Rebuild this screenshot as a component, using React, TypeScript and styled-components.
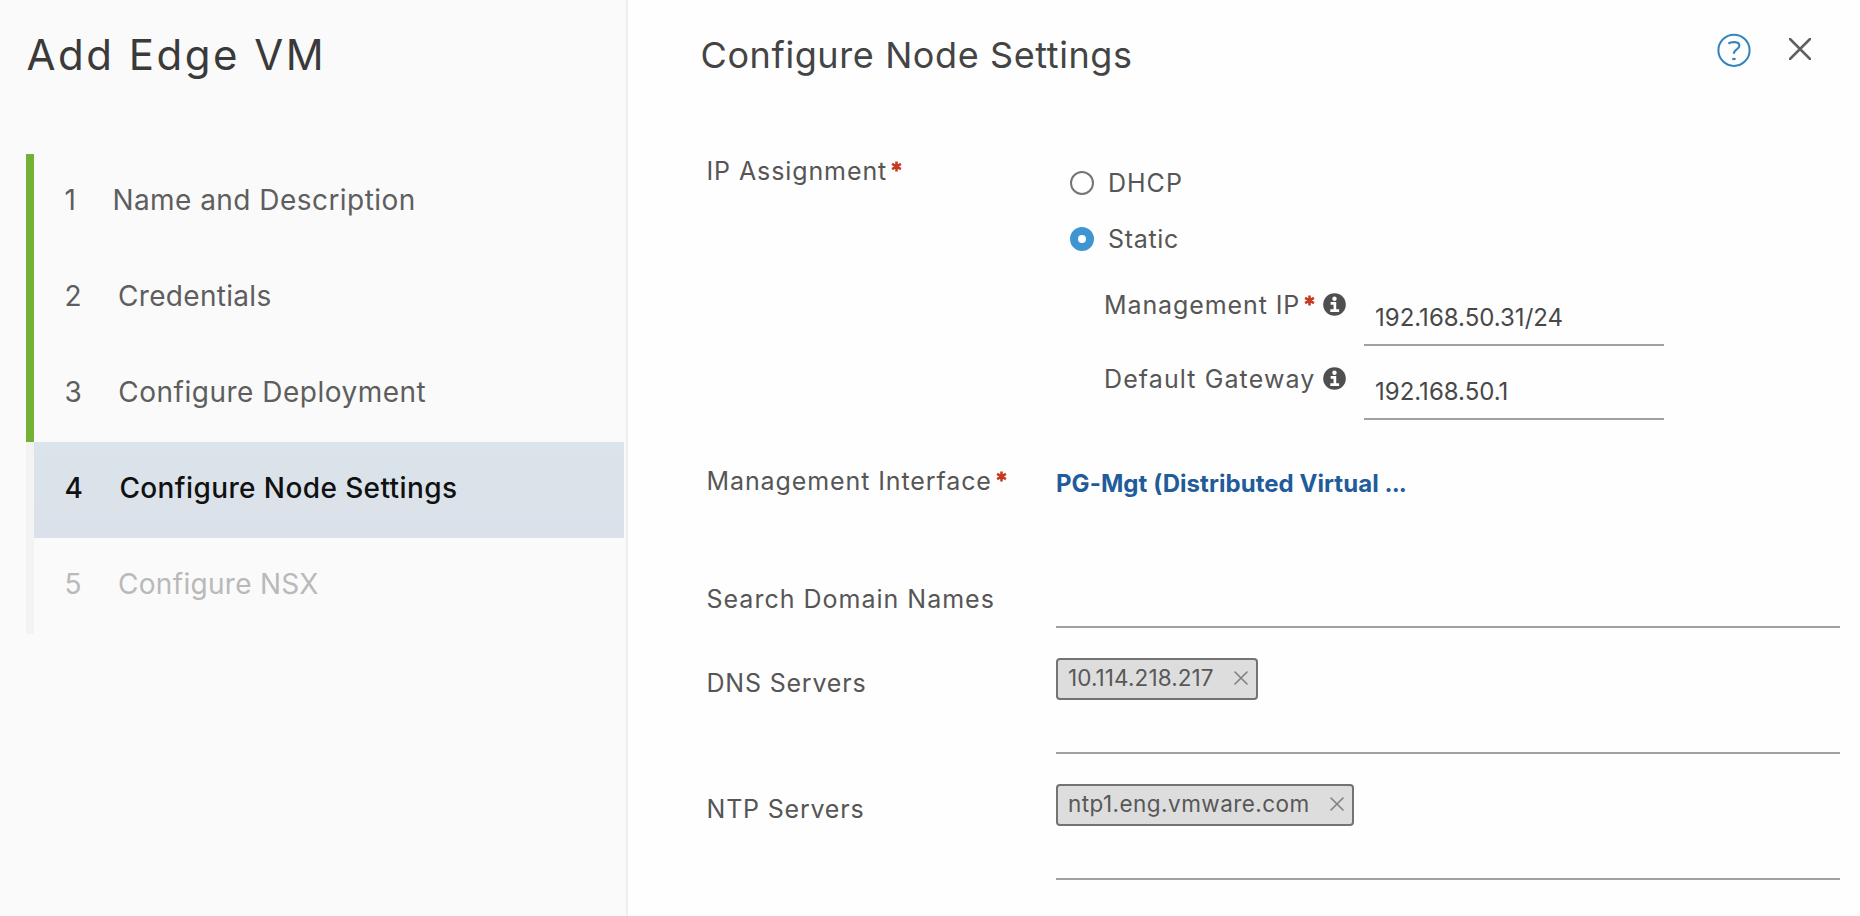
import React from "react";
import styled, { createGlobalStyle } from "styled-components";

const GlobalStyle = createGlobalStyle`
  * { box-sizing: border-box; }
  body { margin: 0; background: #fefefe; }
`;

const Wizard = styled.div`
  display: flex;
  width: 1860px;
  height: 916px;
  overflow: hidden;
  font-family: Inter, "Liberation Sans", sans-serif;
  color: #565656;
  background: #fefefe;
`;

const Sidebar = styled.aside`
  width: 628px;
  flex: none;
  background: #fafafa;
  border-right: 2px solid #eeeeee;
  padding: 30px 2px 0 26px;
`;

const WizardTitle = styled.h1`
  margin: 0 0 74px;
  padding-left: 0.5px;
  font-size: 42px;
  line-height: 50px;
  font-weight: 400;
  letter-spacing: 2.5px;
  color: #3a3a3a;
`;

const StepList = styled.ol`
  list-style: none;
  margin: 0;
  padding: 0;
`;

type StepState = "done" | "active" | "disabled";

const stepColors: Record<StepState, string> = {
  done: "#5e5e5e",
  active: "#111111",
  disabled: "#b9b9b9",
};

const StepItem = styled.li<{ $state: StepState }>`
  display: flex;
  align-items: center;
  gap: 36.5px;
  height: 96px;
  padding: 0 0 4px 30.5px;
  border-left: 8px solid ${(p) => (p.$state === "done" ? "#72b036" : "#f3f3f3")};
  background: ${(p) =>
    p.$state === "active" ? "linear-gradient(#dbe4ea, #dbe1ea) padding-box" : "transparent"};
  color: ${(p) => stepColors[p.$state]};
  font-size: 28px;
  line-height: 40px;
  font-weight: ${(p) => (p.$state === "active" ? 500 : 400)};
`;

const StepLabel = styled.span<{ $tracking: number }>`
  letter-spacing: ${(p) => p.$tracking}px;
  white-space: nowrap;
`;

const Main = styled.main`
  flex: 1;
  padding: 33px 20px 0 71.5px;
`;

const Header = styled.header`
  display: flex;
  justify-content: space-between;
  align-items: flex-start;
  height: 122px;
`;

const PageTitle = styled.h2`
  margin: 0;
  padding-left: 1px;
  font-size: 36px;
  line-height: 44px;
  font-weight: 400;
  letter-spacing: 0.6px;
  color: #444444;
`;

const HeaderActions = styled.div`
  display: flex;
  align-items: flex-start;
  gap: 38px;
  padding-right: 29px;
`;

const IconButton = styled.button`
  display: flex;
  padding: 0;
  border: 0;
  background: none;
`;

const Form = styled.form`
  padding-left: 5.5px;
`;

const FormRow = styled.div<{ $height: number; $labelTop: number; $gap?: number }>`
  display: grid;
  grid-template-columns: 351px 784px;
  height: ${(p) => p.$height}px;
  margin-top: ${(p) => p.$gap ?? 0}px;

  > label {
    padding: ${(p) => p.$labelTop}px 0 0 1.5px;
  }
`;

const Label = styled.label<{ $tracking?: number }>`
  display: flex;
  align-items: flex-start;
  font-size: 25px;
  line-height: 30px;
  letter-spacing: ${(p) => p.$tracking ?? 0.9}px;
  white-space: nowrap;
`;

const RequiredIcon = styled.svg`
  flex: none;
  width: 11px;
  height: 11px;
  margin: 5px 0 0 4px;
`;

const InfoIcon = styled.svg`
  flex: none;
  width: 23px;
  height: 23px;
  margin-top: 3px;
  margin-left: auto;
`;

const RadioRow = styled.div`
  display: flex;
  align-items: center;
  gap: 14px;
  height: 56px;
  padding-left: 14px;
`;

const RadioMark = styled.span<{ $checked?: boolean }>`
  width: 24px;
  height: 24px;
  border-radius: 50%;
  background: #ffffff;
  border: ${(p) => (p.$checked ? "8px solid #3f95d2" : "2px solid #757575")};
`;

const StaticSettings = styled.div`
  padding: 5px 0 0 48px;
`;

const StaticRow = styled.div`
  display: grid;
  grid-template-columns: 242px 300px;
  column-gap: 18px;
  height: 74px;

  > label {
    padding-top: 18px;
  }
`;

const InputLine = styled.div`
  border-bottom: 2px solid #a0a0a0;
  padding: 31px 0 0 11px;
  font-size: 24px;
  line-height: 30px;
  letter-spacing: 0;
  color: #484848;
`;

const LinkValue = styled.a`
  padding-top: 3px;
  font-size: 24px;
  line-height: 30px;
  font-weight: 700;
  font-feature-settings: "calt" 0;
  letter-spacing: 0.05px;
  color: #1f5c99;
  white-space: nowrap;
`;

const Ellipsis = styled.span`
  letter-spacing: -0.8px;
`;

const ChipField = styled.div`
  border-bottom: 2px solid #a0a0a0;
  padding-top: 30px;
`;

const Chip = styled.span<{ $width: number; $tracking: number }>`
  display: flex;
  align-items: center;
  justify-content: space-between;
  width: ${(p) => p.$width}px;
  height: 42px;
  padding: 0 8px 2px 10px;
  border: 2px solid #737373;
  border-radius: 4px;
  background: #dddddd;
  font-size: 22.5px;
  line-height: 30px;
  letter-spacing: ${(p) => p.$tracking}px;
  color: #585858;
`;

const steps: { label: string; state: StepState; tracking: number }[] = [
  { label: "Name and Description", state: "done", tracking: 0.45 },
  { label: "Credentials", state: "done", tracking: 0.3 },
  { label: "Configure Deployment", state: "done", tracking: 0.5 },
  { label: "Configure Node Settings", state: "active", tracking: 0.4 },
  { label: "Configure NSX", state: "disabled", tracking: 0.3 },
];

const Required = () => (
  <RequiredIcon viewBox="0 0 12 12" aria-label="required">
    <path d="M6 0.5V11.5M1.2 3.2L10.8 8.8M10.8 3.2L1.2 8.8" stroke="#c73a22" strokeWidth="2.8" />
  </RequiredIcon>
);

const Info = () => (
  <InfoIcon viewBox="0 0 24 24" aria-label="info">
    <circle cx="12" cy="12" r="11.8" fill="#4f4f4f" />
    <circle cx="12" cy="6" r="2.3" fill="#fff" />
    <path d="M8 10.8H12.4V18M7.6 18.4H16.8" fill="none" stroke="#fff" strokeWidth="2.8" />
  </InfoIcon>
);

const Cross = ({ size, color, width }: { size: number; color: string; width: number }) => (
  <svg width={size} height={size} viewBox={`0 0 ${size} ${size}`}>
    <path
      d={`M1 1L${size - 1} ${size - 1}M${size - 1} 1L1 ${size - 1}`}
      stroke={color}
      strokeWidth={width}
      strokeLinecap="round"
    />
  </svg>
);

const ChipValue = ({ text, width, tracking }: { text: string; width: number; tracking: number }) => (
  <Chip $width={width} $tracking={tracking}>
    {text}
    <Cross size={14} color="#808080" width={1.6} />
  </Chip>
);

const CloseButton = styled(IconButton)`
  margin-top: 5px;
`;

export default function App() {
  return (
    <Wizard>
      <GlobalStyle />
      <Sidebar>
        <WizardTitle>Add Edge VM</WizardTitle>
        <StepList>
          {steps.map((s, i) => (
            <StepItem key={s.label} $state={s.state}>
              <span>{i + 1}</span>
              <StepLabel $tracking={s.tracking}>{s.label}</StepLabel>
            </StepItem>
          ))}
        </StepList>
      </Sidebar>
      <Main>
        <Header>
          <PageTitle>Configure Node Settings</PageTitle>
          <HeaderActions>
            <IconButton aria-label="Help">
              <svg width="34" height="34" viewBox="0 0 34 34" fill="none" stroke="#3585bd">
                <circle cx="17" cy="17.3" r="15.6" strokeWidth="2" />
                <path
                  d="M11.4 10.6C13.5 8.8 22.4 7.8 22.4 12.6C22.4 16.8 16.8 16 16.8 20.8"
                  strokeWidth="2.1"
                />
                <path d="M15.2 26H18.6" strokeWidth="2.2" />
              </svg>
            </IconButton>
            <CloseButton aria-label="Close">
              <Cross size={22} color="#606060" width={2.5} />
            </CloseButton>
          </HeaderActions>
        </Header>
        <Form>
          <FormRow $height={265} $labelTop={1}>
            <Label $tracking={0.9}>
              IP Assignment
              <Required />
            </Label>
            <div>
              <RadioRow>
                <RadioMark />
                <Label $tracking={1}>DHCP</Label>
              </RadioRow>
              <RadioRow>
                <RadioMark $checked />
                <Label $tracking={0.7}>Static</Label>
              </RadioRow>
              <StaticSettings>
                <StaticRow>
                  <Label $tracking={0.9}>
                    Management IP
                    <Required />
                    <Info />
                  </Label>
                  <InputLine>192.168.50.31/24</InputLine>
                </StaticRow>
                <StaticRow>
                  <Label $tracking={1.1}>
                    Default Gateway
                    <Info />
                  </Label>
                  <InputLine>192.168.50.1</InputLine>
                </StaticRow>
              </StaticSettings>
            </div>
          </FormRow>
          <FormRow $height={100} $labelTop={0} $gap={46}>
            <Label $tracking={0.9}>
              Management Interface
              <Required />
            </Label>
            <LinkValue>
              PG-Mgt (Distributed Virtual <Ellipsis>...</Ellipsis>
            </LinkValue>
          </FormRow>
          <FormRow $height={62} $labelTop={18}>
            <Label $tracking={1}>Search Domain Names</Label>
            <ChipField />
          </FormRow>
          <FormRow $height={126} $labelTop={40}>
            <Label $tracking={0.8}>DNS Servers</Label>
            <ChipField>
              <ChipValue text="10.114.218.217" width={202} tracking={0.1} />
            </ChipField>
          </FormRow>
          <FormRow $height={126} $labelTop={40}>
            <Label $tracking={0.8}>NTP Servers</Label>
            <ChipField>
              <ChipValue text="ntp1.eng.vmware.com" width={298} tracking={0.45} />
            </ChipField>
          </FormRow>
        </Form>
      </Main>
    </Wizard>
  );
}
